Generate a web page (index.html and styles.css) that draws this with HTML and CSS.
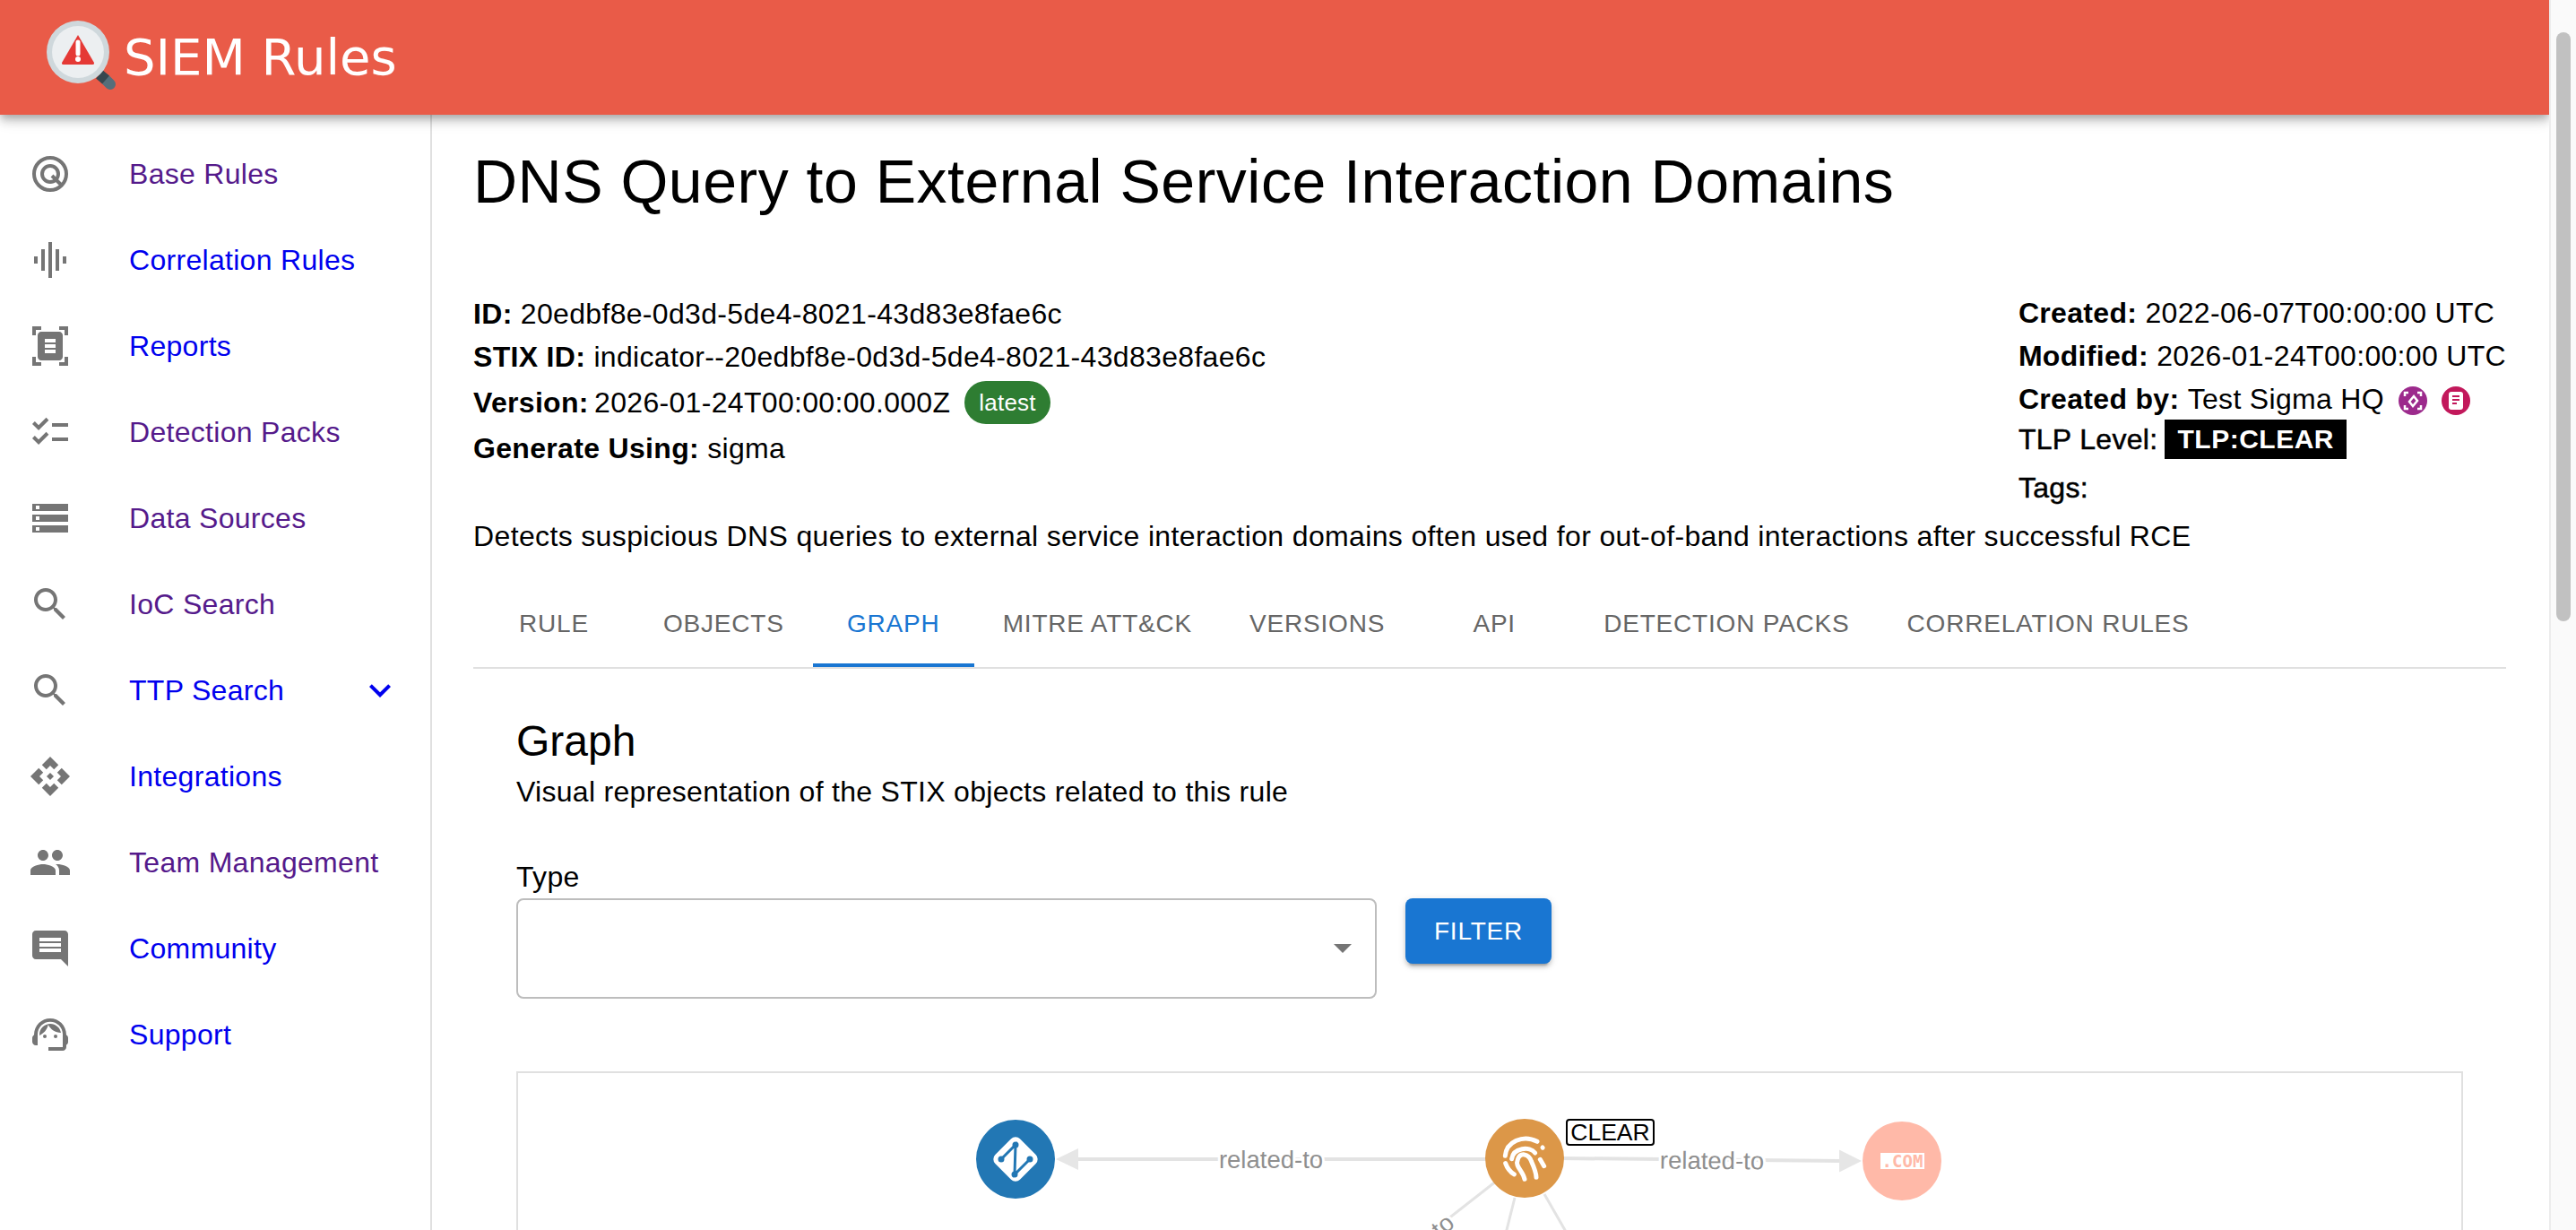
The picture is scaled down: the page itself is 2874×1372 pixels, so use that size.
FILE: index.html
```html
<!DOCTYPE html>
<html lang="en">
<head>
<meta charset="utf-8">
<title>SIEM Rules</title>
<link rel="stylesheet" href="styles.css">
</head>
<body>
<div class="app">
  <header class="appbar">
    <svg class="logo" viewBox="0 0 90 84" width="90" height="84">
      <path class="logo-handle-light" d="M66 65 L72 71"/>
      <path class="logo-handle-dark" d="M60 60 L67 66"/>
      <circle class="logo-ring" cx="36" cy="35" r="35"/>
      <circle class="logo-glass" cx="36" cy="35" r="29"/>
      <path class="logo-warn" d="M36 16 L54 47 Q54.500 49 52.500 49 L19.500 49 Q17.500 49 18 47 Z"/>
      <path class="logo-bang" d="M36 24 V37"/>
      <circle class="logo-dot" cx="36" cy="43" r="3"/>
    </svg>
    <span class="brand">SIEM Rules</span>
  </header>
  <div class="shell">
    <nav class="sidebar">
      <a class="nav-item visited"><svg class="nav-icon" viewBox="0 0 24 24"><circle class="ico-line" cx="12" cy="12" r="9"/><circle class="ico-line" cx="12" cy="12" r="4.500"/><path class="ico-line" d="M13 13 L18 18"/></svg><span>Base Rules</span></a>
      <a class="nav-item"><svg class="nav-icon" viewBox="0 0 24 24"><path d="M7 18h2V6H7v12zm4 4h2V2h-2v20zm-8-8h2v-4H3v4zm12 4h2V6h-2v12zm4-8v4h2v-4h-2z"/></svg><span>Correlation Rules</span></a>
      <a class="nav-item"><svg class="nav-icon" viewBox="0 0 24 24"><path fill-rule="evenodd" d="M7 3H4v3H2V1h5v2zm15 3V1h-5v2h3v3h2zM7 21H4v-3H2v5h5v-2zm13-3v3h-3v2h5v-5h-2zM19 18c0 1.100-.9 2-2 2H7c-1.100 0-2-.9-2-2V6c0-1.100.9-2 2-2h10c1.100 0 2 .9 2 2v12zM15 8H9v2h6V8zm0 3H9v2h6v-2zm0 3H9v2h6v-2z"/></svg><span>Reports</span></a>
      <a class="nav-item visited"><svg class="nav-icon" viewBox="0 0 24 24"><path d="M22 7h-9v2h9V7zm0 8h-9v2h9v-2zM5.540 11 2 7.460l1.410-1.410 2.120 2.120 4.240-4.240 1.410 1.410L5.540 11zm0 8L2 15.460l1.410-1.410 2.120 2.120 4.240-4.240 1.410 1.410L5.540 19z"/></svg><span>Detection Packs</span></a>
      <a class="nav-item visited"><svg class="nav-icon" viewBox="0 0 24 24"><path d="M2 20h20v-4H2v4zm2-3h2v2H4v-2zM2 4v4h20V4H2zm4 3H4V5h2v2zm-4 7h20v-4H2v4zm2-3h2v2H4v-2z"/></svg><span>Data Sources</span></a>
      <a class="nav-item visited"><svg class="nav-icon" viewBox="0 0 24 24"><path d="M15.500 14h-.79l-.28-.27C15.410 12.590 16 11.110 16 9.500 16 5.910 13.090 3 9.500 3S3 5.910 3 9.500 5.910 16 9.500 16c1.610 0 3.090-.59 4.230-1.570l.27.28v.79l5 4.990L20.490 19l-4.990-5zm-6 0C7.010 14 5 11.990 5 9.500S7.010 5 9.500 5 14 7.010 14 9.500 11.990 14 9.500 14z"/></svg><span>IoC Search</span></a>
      <a class="nav-item"><svg class="nav-icon" viewBox="0 0 24 24"><path d="M15.500 14h-.79l-.28-.27C15.410 12.590 16 11.110 16 9.500 16 5.910 13.090 3 9.500 3S3 5.910 3 9.500 5.910 16 9.500 16c1.610 0 3.090-.59 4.230-1.570l.27.28v.79l5 4.990L20.490 19l-4.990-5zm-6 0C7.010 14 5 11.990 5 9.500S7.010 5 9.500 5 14 7.010 14 9.500 11.990 14 9.500 14z"/></svg><span>TTP Search</span><svg class="nav-chevron" viewBox="0 0 24 24"><path d="M16.590 8.590 12 13.170 7.410 8.590 6 10l6 6 6-6z"/></svg></a>
      <a class="nav-item"><svg class="nav-icon" viewBox="0 0 24 24"><path d="M14 12l-2 2-2-2 2-2 2 2zm-2-6 2.120 2.120 2.500-2.500L12 1 7.380 5.620l2.500 2.500L12 6zm-6 6 2.120-2.120-2.500-2.500L1 12l4.620 4.620 2.500-2.500L6 12zm12 0-2.120 2.120 2.500 2.500L23 12l-4.620-4.620-2.500 2.500L18 12zm-6 6-2.120-2.120-2.500 2.500L12 23l4.620-4.620-2.500-2.500L12 18z"/></svg><span>Integrations</span></a>
      <a class="nav-item visited"><svg class="nav-icon" viewBox="0 0 24 24"><path d="M16 11c1.660 0 2.990-1.340 2.990-3S17.660 5 16 5c-1.660 0-3 1.340-3 3s1.340 3 3 3zm-8 0c1.660 0 2.990-1.340 2.990-3S9.660 5 8 5C6.340 5 5 6.340 5 8s1.340 3 3 3zm0 2c-2.330 0-7 1.170-7 3.500V19h14v-2.500c0-2.330-4.670-3.500-7-3.500zm8 0c-.29 0-.62.02-.97.05 1.160.84 1.970 1.970 1.970 3.450V19h6v-2.500c0-2.330-4.670-3.500-7-3.500z"/></svg><span>Team Management</span></a>
      <a class="nav-item"><svg class="nav-icon" viewBox="0 0 24 24"><path d="M21.990 4c0-1.100-.89-2-1.990-2H4c-1.100 0-2 .9-2 2v12c0 1.100.9 2 2 2h14l4 4-.01-18zM18 14H6v-2h12v2zm0-3H6V9h12v2zm0-3H6V6h12v2z"/></svg><span>Community</span></a>
      <a class="nav-item"><svg class="nav-icon" viewBox="0 0 24 24"><path d="M21 12.220C21 6.730 16.740 3 12 3c-4.690 0-9 3.650-9 9.280-.6.340-1 .98-1 1.720v2c0 1.100.9 2 2 2h1v-6.100c0-3.870 3.130-7 7-7s7 3.130 7 7V19h-8v2h8c1.100 0 2-.9 2-2v-1.220c.59-.31 1-.92 1-1.640v-2.300c0-.7-.41-1.310-1-1.620z"/><circle cx="9" cy="13" r="1"/><circle cx="15" cy="13" r="1"/><path d="M18 11.030C17.520 8.180 15.040 6 12.050 6c-3.030 0-6.290 2.510-6.030 6.450 2.470-1.010 4.330-3.210 4.860-5.890 1.310 2.630 4 4.440 7.120 4.470z"/></svg><span>Support</span></a>
    </nav>
    <main class="content">
      <h1 class="title">DNS Query to External Service Interaction Domains</h1>
      <section class="meta">
        <div class="meta-left">
          <div class="row"><b>ID:</b> 20edbf8e-0d3d-5de4-8021-43d83e8fae6c</div>
          <div class="row"><b>STIX ID:</b> indicator--20edbf8e-0d3d-5de4-8021-43d83e8fae6c</div>
          <div class="row row-version"><b class="version-label">Version:</b>&nbsp;2026-01-24T00:00:00.000Z<span class="chip">latest</span></div>
          <div class="row"><b>Generate Using:</b> sigma</div>
        </div>
        <div class="meta-right">
          <div class="row"><b>Created:</b> 2022-06-07T00:00:00 UTC</div>
          <div class="row"><b>Modified:</b> 2026-01-24T00:00:00 UTC</div>
          <div class="row row-author"><b>Created by:</b>&nbsp;Test Sigma HQ
            <svg class="badge-icon badge-purple" viewBox="0 0 32 32"><circle class="badge-disc" cx="16" cy="16" r="16"/><path class="badge-stroke" d="M7 11V7h4M21 7h4v4M25 21v4h-4M11 25H7v-4M12 17l5-6 4 5-5 6z"/></svg>
            <svg class="badge-icon badge-pink" viewBox="0 0 32 32"><circle class="badge-disc" cx="16" cy="16" r="16"/><rect class="badge-paper" x="8" y="6" width="16" height="20" rx="3"/><path class="badge-ink" d="M12 11h8M12 15h8M12 19h5"/></svg>
          </div>
          <div class="row row-tlp"><span class="label-medium">TLP Level:</span><span class="tlp">TLP:CLEAR</span></div>
          <div class="row row-tags"><span class="label-medium">Tags:</span></div>
        </div>
      </section>
      <p class="description">Detects suspicious DNS queries to external service interaction domains often used for out-of-band interactions after successful RCE</p>
      <div class="tabs">
        <span class="tab">Rule</span>
        <span class="tab">Objects</span>
        <span class="tab active">Graph</span>
        <span class="tab">MITRE ATT&amp;CK</span>
        <span class="tab">Versions</span>
        <span class="tab">API</span>
        <span class="tab">Detection Packs</span>
        <span class="tab">Correlation Rules</span>
      </div>
      <section class="panel">
        <h2 class="panel-title">Graph</h2>
        <p class="panel-sub">Visual representation of the STIX objects related to this rule</p>
        <div class="field-label">Type</div>
        <div class="filter-row">
          <div class="select"><span class="select-arrow"></span></div>
          <button class="btn">Filter</button>
        </div>
        <div class="graph">
          <svg class="graph-svg" width="2168" height="700" viewBox="578 1197 2168 700">
            <path class="edge" d="M1200 1293 H1660"/>
            <path class="edge" d="M1740 1292 L2056 1295"/>
            <path class="edge edge-thin" d="M1670 1317 L1500 1450"/>
            <path class="edge edge-thin" d="M1690 1336 L1660 1456"/>
            <path class="edge edge-thin" d="M1723 1332 L1800 1466"/>
            <path class="arrow" d="M1178 1293 L1203 1281 V1305 Z"/>
            <path class="arrow" d="M2077 1295 L2052 1282.500 V1307.500 Z"/>
            <text class="edge-label" x="1418" y="1303" text-anchor="middle">related-to</text>
            <text class="edge-label" x="1910" y="1304" text-anchor="middle" transform="rotate(.5 1910 1294)">related-to</text>
            <text class="edge-label" x="1573" y="1406" text-anchor="middle" transform="rotate(-39 1573 1396)">related-to</text>

            <circle class="node-blue" cx="1133" cy="1293" r="44"/>
            <rect class="node-white" x="1113.500" y="1273.500" width="39" height="39" rx="7" transform="rotate(45 1133 1293)"/>
            <path class="node1-line" d="M1117 1293 L1133 1277 L1132 1310 L1149 1293"/>
            <circle class="node1-dot" cx="1117" cy="1293" r="3.500"/>
            <circle class="node1-dot" cx="1133" cy="1277" r="3.500"/>
            <circle class="node1-dot" cx="1132" cy="1310" r="3.500"/>
            <circle class="node1-dot" cx="1149" cy="1293" r="3.500"/>

            <circle class="node-orange" cx="1701" cy="1292" r="44"/>
            <g class="fingerprint" transform="translate(1640 1230) scale(.3333)">
              <path d="M118 178 C122 130 178 105 225 130"/>
              <path d="M119 203 C125 220 135 232 148 240"/>
              <path d="M140 188 C145 150 200 145 218 168 M235 190 L248 212"/>
              <path d="M183 256 C176 225 150 215 160 190 C168 165 196 170 205 195 C214 215 222 235 222 250"/>
              <path d="M243 150 L243.500 150.500"/>
            </g>
            <rect class="clear-box" x="1748" y="1249" width="97" height="28" rx="3"/>
            <text class="clear-text" x="1796.500" y="1272" text-anchor="middle">CLEAR</text>

            <circle class="node-salmon" cx="2122" cy="1295" r="44"/>
            <rect class="node-white" x="2098" y="1286" width="49" height="18"/>
            <text class="com-text" x="2122.500" y="1301.500" text-anchor="middle">.COM</text>
          </svg>
        </div>
      </section>
    </main>
  </div>
</div>
<div class="scrollbar"><div class="scrollbar-thumb"></div></div>
</body>
</html>
```

FILE: styles.css
```css
* { box-sizing: border-box; }
html, body { height: 100%; }
body {
  margin: 0;
  display: flex;
  overflow: hidden;
  background: #fff;
  color: #000;
  font-family: "Liberation Sans", Arial, sans-serif;
  font-size: 32px;
}
.app {
  flex: 1;
  min-width: 0;
  height: 100vh;
  display: flex;
  flex-direction: column;
  overflow: hidden;
}
.appbar {
  height: 128px;
  flex: none;
  display: flex;
  align-items: flex-start;
  background: #e95b48;
  position: relative;
  z-index: 2;
  padding: 23px 0 0 51px;
  box-shadow: 0 4px 8px -2px rgba(0,0,0,.2), 0 8px 10px 0 rgba(0,0,0,.14), 0 2px 20px 0 rgba(0,0,0,.12);
}
.logo { flex: none; display: block; }
.logo-ring { fill: #cfd8dc; }
.logo-glass { fill: #eceff1; }
.logo-warn { fill: #e53935; }
.logo-bang { stroke: #fff; stroke-width: 5; stroke-linecap: round; fill: none; }
.logo-dot { fill: #fff; }
.logo-handle-light { stroke: #546e7a; stroke-width: 12; stroke-linecap: round; fill: none; }
.logo-handle-dark { stroke: #37474f; stroke-width: 12; fill: none; }
.brand {
  margin: 6px 0 0 -3px;
  font-family: "DejaVu Sans", sans-serif;
  font-size: 56px;
  line-height: 70px;
  color: #fff;
  filter: blur(.5px);
}
.shell { flex: 1; display: flex; min-height: 0; }
.sidebar {
  width: 482px;
  flex: none;
  padding-top: 18px;
  border-right: 2px solid #e0e0e0;
}
.nav-item {
  height: 96px;
  display: flex;
  align-items: center;
  padding: 0 32px;
  color: #0000ee;
  letter-spacing: .3px;
}
.nav-item.visited { color: #551a8b; }
.nav-icon { width: 48px; height: 48px; flex: none; margin-right: 64px; fill: #757575; }
.ico-line { fill: none; stroke: #757575; stroke-width: 2; }
.nav-chevron { width: 48px; height: 48px; margin-left: auto; margin-right: 0; fill: #0000ee; }
.content { flex: 1; min-width: 0; padding: 33px 48px 0 46px; }
.title {
  margin: 0 0 84px;
  font-size: 68px;
  line-height: 82px;
  font-weight: 400;
  letter-spacing: .5px;
}
.meta { display: flex; justify-content: space-between; letter-spacing: .32px; }
.meta-left { margin-top: -1px; }
.meta-right { margin-top: -2px; }
.row { line-height: 48px; height: 48px; white-space: nowrap; }
.row-version { display: flex; align-items: center; height: 54px; }
.version-label { margin-right: -3px; }
.chip {
  height: 48px;
  margin-left: 16px;
  padding: 0 16px;
  border-radius: 24px;
  background: #2e7d32;
  color: #fff;
  font-size: 26px;
  line-height: 48px;
  letter-spacing: .2px;
}
.row-author { display: flex; align-items: center; }
.badge-icon { width: 32px; height: 32px; flex: none; margin: 4px 0 0 16px; }
.badge-purple .badge-disc { fill: #9c2a8c; }
.badge-pink .badge-disc { fill: #c2185b; }
.badge-stroke { fill: none; stroke: #fff; stroke-width: 2.500; }
.badge-paper { fill: #fff; }
.badge-ink { fill: none; stroke: #c2185b; stroke-width: 2; }
.label-medium { -webkit-text-stroke: .5px #000; }
.row-tlp { display: flex; align-items: center; height: 42px; }
.tlp {
  margin-left: 8px;
  height: 44px;
  padding: 0 14px;
  background: #000;
  color: #fff;
  font-size: 30px;
  font-weight: 700;
  line-height: 44px;
  letter-spacing: .5px;
}
.row-tags { margin-top: 9px; }
.description { margin: 6px 0 26px; line-height: 48px; white-space: nowrap; letter-spacing: .36px; }
.tabs { display: flex; height: 98px; border-bottom: 2px solid #e0e0e0; }
.tab {
  min-width: 180px;
  height: 96px;
  padding: 0 32px;
  display: flex;
  align-items: center;
  justify-content: center;
  font-size: 28px;
  letter-spacing: .8px;
  text-transform: uppercase;
  color: #666;
  white-space: nowrap;
}
.tab.active { color: #1976d2; border-bottom: 4px solid #1976d2; padding-top: 4px; }
.panel { padding: 53px 48px 0; }
.panel-title { margin: 0 0 4px; font-size: 48px; line-height: 56px; font-weight: 400; }
.panel-sub { margin: 0 0 47px; line-height: 48px; letter-spacing: .3px; }
.field-label { line-height: 48px; letter-spacing: .3px; }
.filter-row { display: flex; align-items: flex-start; gap: 32px; margin-bottom: 81px; }
.select {
  width: 960px;
  height: 112px;
  border: 2px solid #bdbdbd;
  border-radius: 8px;
  display: flex;
  align-items: center;
  justify-content: flex-end;
  padding-right: 26px;
}
.select-arrow {
  width: 0;
  height: 0;
  border-left: 10px solid transparent;
  border-right: 10px solid transparent;
  border-top: 10px solid #757575;
}
.btn {
  width: 163px;
  height: 73px;
  border: 0;
  border-radius: 8px;
  background: #1976d2;
  color: #fff;
  font-family: inherit;
  font-size: 28px;
  letter-spacing: .8px;
  text-transform: uppercase;
  box-shadow: 0 6px 2px -4px rgba(0,0,0,.2), 0 4px 4px 0 rgba(0,0,0,.14), 0 2px 10px 0 rgba(0,0,0,.12);
}
.graph { border: 2px solid #e0e0e0; height: 700px; overflow: hidden; }
.graph-svg { display: block; font-family: "Liberation Sans", Arial, sans-serif; }
.edge { stroke: #e3e3e3; stroke-width: 4; fill: none; }
.edge-thin { stroke-width: 3; }
.arrow { fill: #e6e6e6; }
.edge-label {
  font-size: 27.500px;
  fill: #8f8f8f;
  stroke: #fff;
  stroke-width: 6px;
  paint-order: stroke;
}
.node-blue { fill: #2277b4; }
.node-orange { fill: #dc9748; }
.node-salmon { fill: #ffb9a8; }
.node-white { fill: #fff; }
.node1-line { fill: none; stroke: #2277b4; stroke-width: 3; }
.node1-dot { fill: #2277b4; }
.fingerprint path { fill: none; stroke: #fff; stroke-width: 15; stroke-linecap: round; }
.clear-box { fill: #fff; stroke: #000; stroke-width: 2; }
.clear-text { font-size: 26.500px; fill: #000; }
.com-text {
  font-family: "DejaVu Sans Mono", monospace;
  font-size: 19px;
  font-weight: 700;
  fill: #ffb9a8;
}
.scrollbar {
  width: 30px;
  flex: none;
  height: 100vh;
  padding: 36px 6px 0;
  background: #fafafa;
  border-left: 2px solid #ececec;
}
.scrollbar-thumb { height: 657px; border-radius: 8px; background: #c1c1c1; }
```
